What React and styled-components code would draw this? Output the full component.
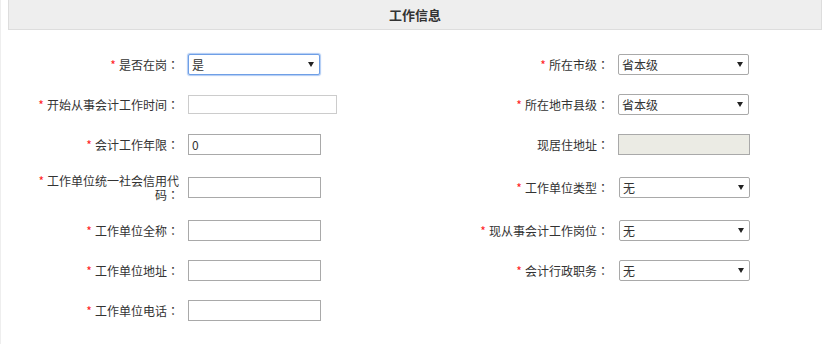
import React from "react";
import styled, { createGlobalStyle } from "styled-components";

const GlobalStyle = createGlobalStyle`
  html, body {
    margin: 0;
    padding: 0;
    background: #fff;
  }
  body {
    font-family: "Noto Sans CJK SC", "Noto Sans", sans-serif;
    font-size: 12px;
    color: #333;
  }
`;

const Page = styled.div`
  border-left: 1px solid #eee;
  padding: 0 10px 20px 7px;
  min-height: 344px;
  box-sizing: border-box;
`;

const Header = styled.div`
  height: 29px;
  line-height: 29px;
  background: #eee;
  border: 1px solid #ddd;
  border-top: none;
  text-align: center;
  font-size: 13px;
  font-weight: bold;
  color: #333;
`;

const Form = styled.div`
  display: grid;
  grid-template-columns: 171px 212px 200px 1fr;
  column-gap: 9px;
  row-gap: 19px;
  align-items: center;
  margin-top: 24px;
`;

const Label = styled.div`
  justify-self: end;
  width: ${props => (props.wide ? "200px" : "145px")};
  text-align: right;
  line-height: 13.5px;
  color: #333;
`;

const Star = styled.span`
  color: #f22;
  margin-right: 3px;
`;

// centred full-width colon, as in the original form
const Colon = styled.span`
  font-family: "Noto Sans CJK TC", "Noto Sans CJK SC", sans-serif;
`;

const Field = styled.input`
  box-sizing: border-box;
  width: ${props => props.w || 133}px;
  height: ${props => props.h || 21}px;
  margin: 0;
  padding: 0 3px;
  border: 1px solid ${props => (props.light ? "#ccc" : "#a9a9a9")};
  border-radius: 0;
  background: ${props => (props.disabled ? "#ebebe4" : "#fff")};
  font-family: inherit;
  font-size: 12px;
  color: #333;
  outline: none;
`;

const SelectWrap = styled.div`
  position: relative;
  width: ${props => props.w || 132}px;
  margin-left: ${props => props.shift || 0}px;

  &::after {
    content: "";
    position: absolute;
    right: 6px;
    top: 8px;
    border-left: 3px solid transparent;
    border-right: 3px solid transparent;
    border-top: 5px solid #222;
    pointer-events: none;
  }
`;

const Select = styled.select`
  box-sizing: border-box;
  appearance: none;
  -webkit-appearance: none;
  width: 100%;
  height: 21px;
  margin: 0;
  padding: 0 16px 0 3px;
  border: 1px solid ${props => (props.focused ? "#6f9fe6" : "#a9a9a9")};
  border-radius: 2px;
  box-shadow: ${props =>
    props.focused ? "0 0 1px 1px rgba(110, 160, 235, 0.55)" : "none"};
  background: #fff;
  font-family: inherit;
  font-size: 12px;
  color: #333;
  outline: none;
`;

const Req = ({ children, wide, plain }) => (
  <Label wide={wide}>
    {!plain && <Star>*</Star>}
    {children}
    <Colon>：</Colon>
  </Label>
);

const Dropdown = ({ value, w, shift, focused }) => (
  <SelectWrap w={w} shift={shift}>
    <Select defaultValue={value} focused={focused}>
      <option value={value}>{value}</option>
    </Select>
  </SelectWrap>
);

const Empty = styled.div``;

export default function App() {
  return (
    <Page>
      <GlobalStyle />
      <Header>工作信息</Header>
      <Form>
        <Req>是否在岗</Req>
        <Dropdown value="是" focused />
        <Req wide>所在市级</Req>
        <Dropdown value="省本级" w={131} />

        <Req>开始从事会计工作时间</Req>
        <Field w={149} h={19} light />
        <Req wide>所在地市县级</Req>
        <Dropdown value="省本级" w={131} />

        <Req>会计工作年限</Req>
        <Field defaultValue="0" />
        <Req wide plain>现居住地址</Req>
        <Field w={132} disabled />

        <Req>工作单位统一社会信用代码</Req>
        <Field />
        <Req wide>工作单位类型</Req>
        <Dropdown value="无" w={131} shift={1} />

        <Req>工作单位全称</Req>
        <Field />
        <Req wide>现从事会计工作岗位</Req>
        <Dropdown value="无" w={131} shift={1} />

        <Req>工作单位地址</Req>
        <Field />
        <Req wide>会计行政职务</Req>
        <Dropdown value="无" w={131} shift={1} />

        <Req>工作单位电话</Req>
        <Field />
        <Empty />
        <Empty />
      </Form>
    </Page>
  );
}
